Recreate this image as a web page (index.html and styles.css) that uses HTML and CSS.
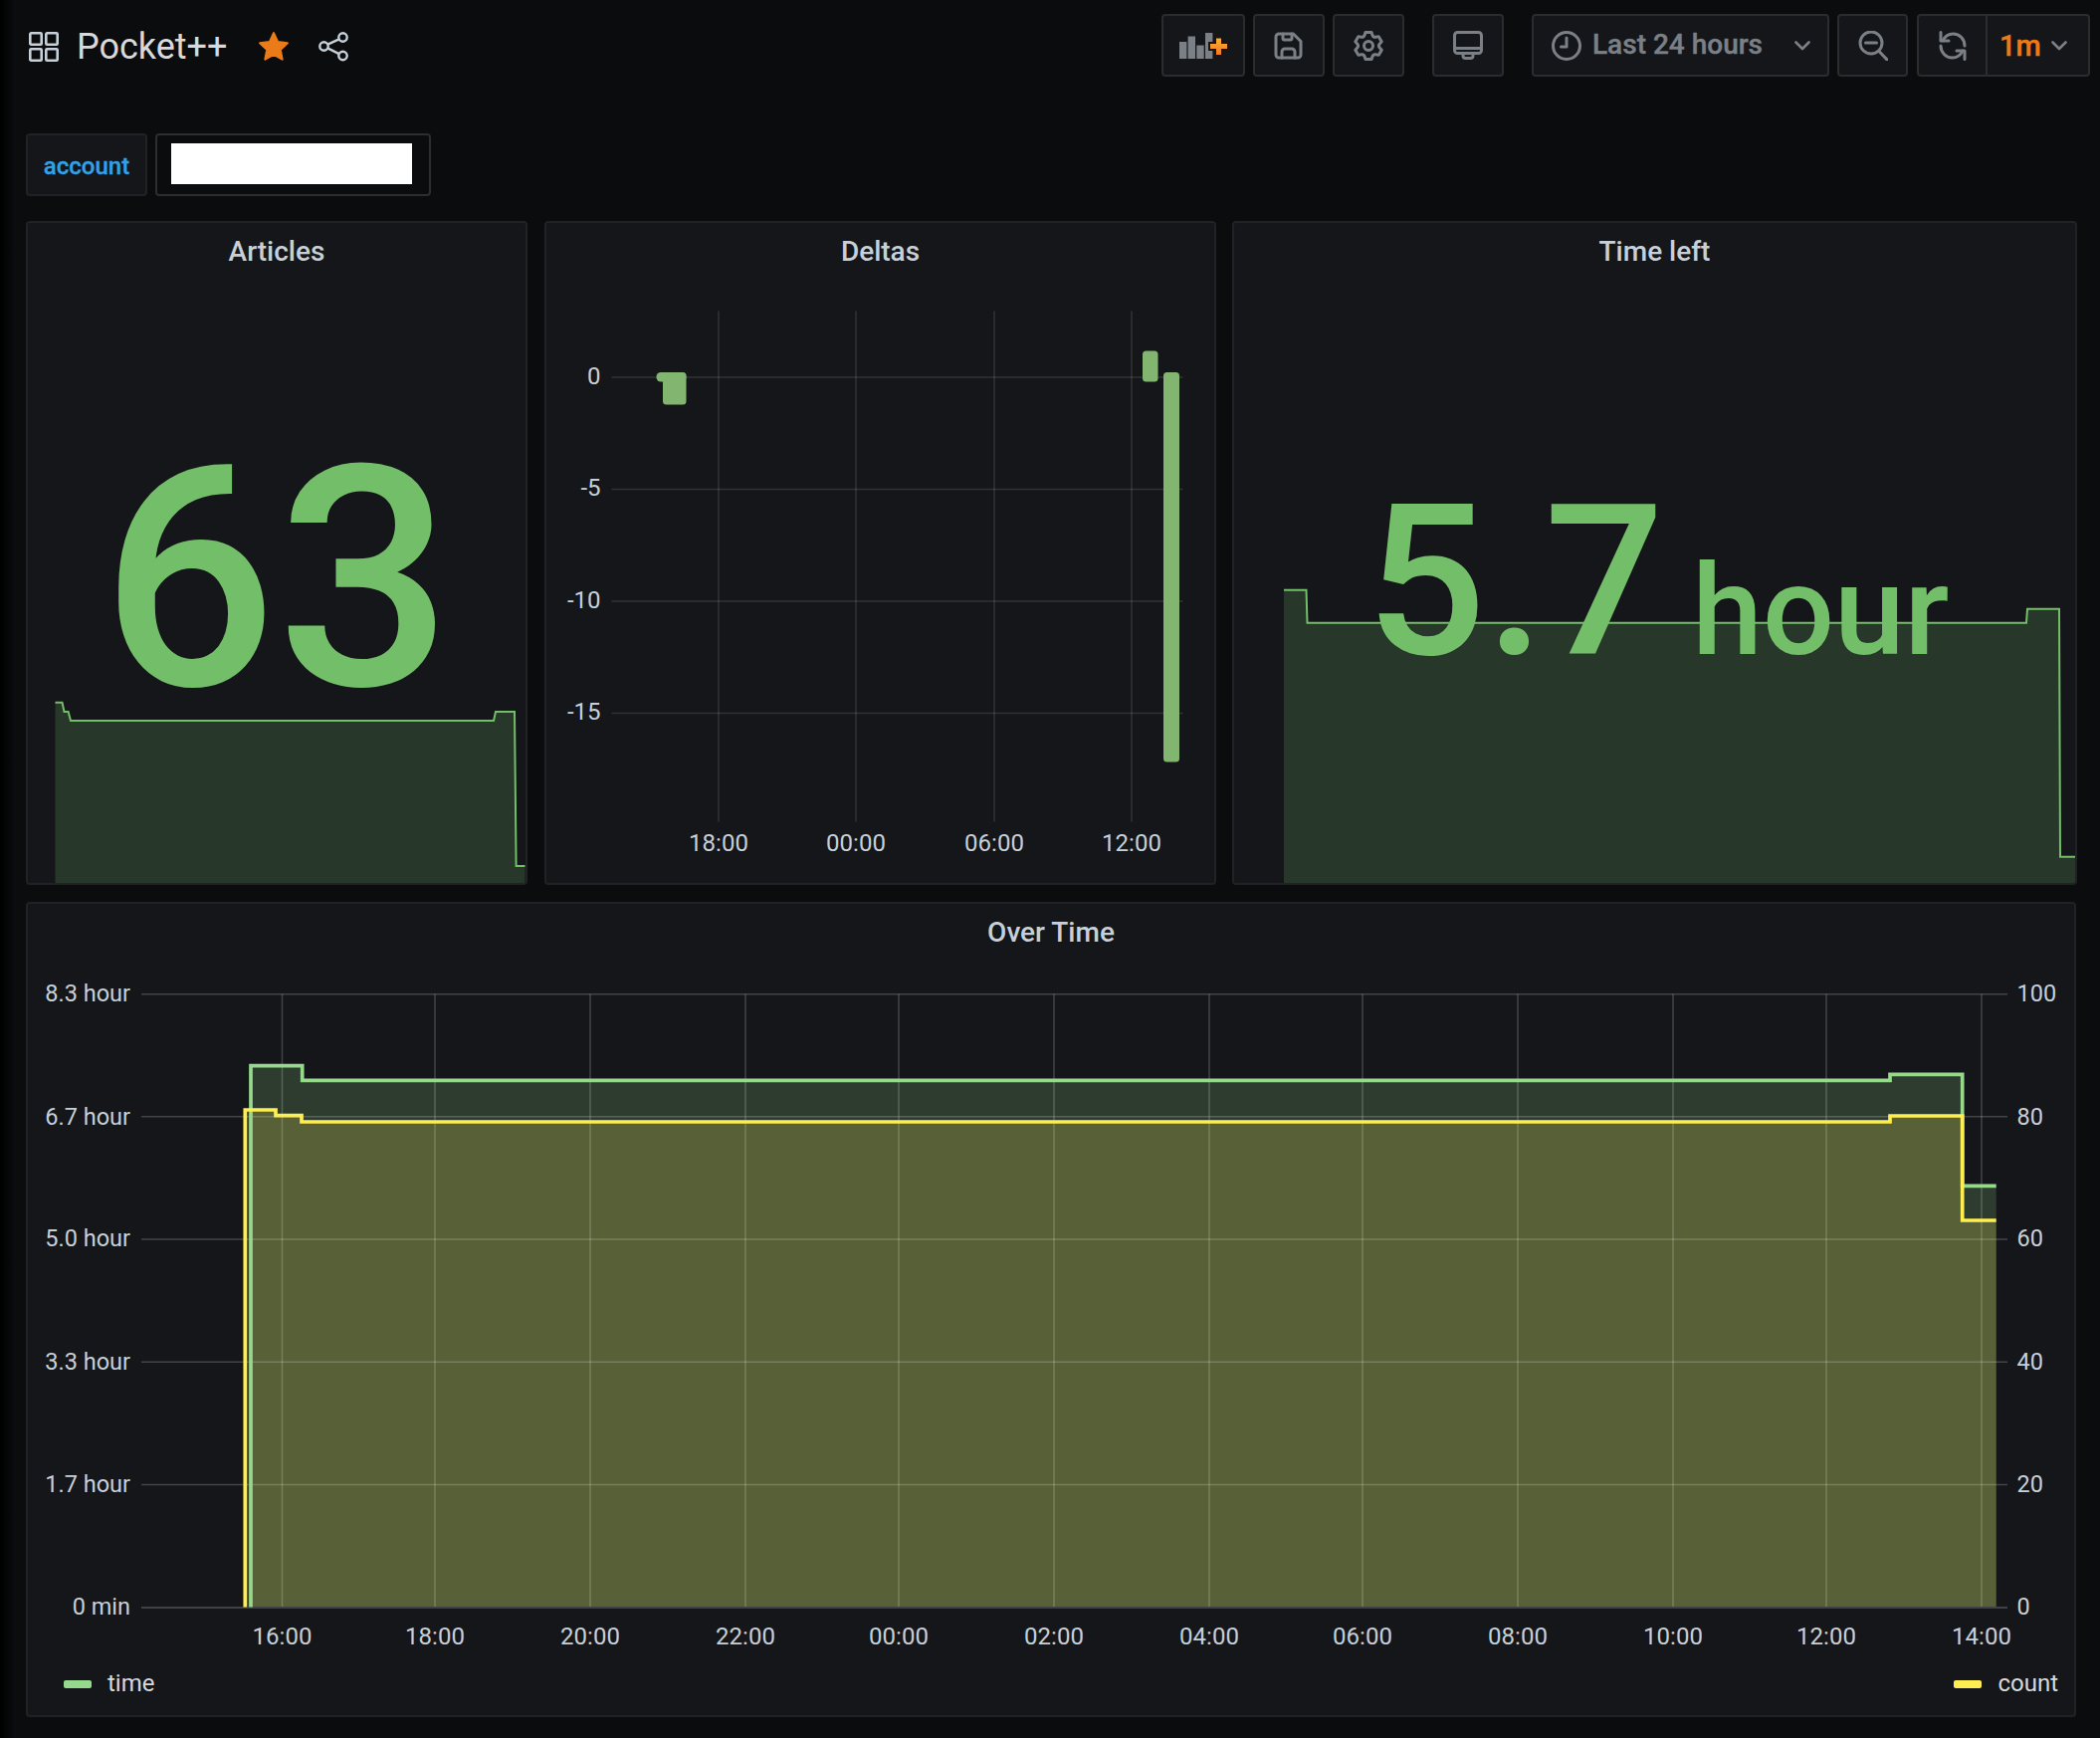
FILE: index.html
```html
<!DOCTYPE html>
<html lang="en">
<head>
<meta charset="utf-8">
<title>Pocket++</title>
<link rel="stylesheet" href="styles.css">
</head>
<body>
<div class="page">
  <header class="topbar">
    <svg class="ic-apps" viewBox="0 0 30 30"><rect x="1.300" y="1.300" width="11.400" height="11.400" rx="1"/><rect x="17.300" y="1.300" width="11.400" height="11.400" rx="1"/><rect x="1.300" y="17.300" width="11.400" height="11.400" rx="1"/><rect x="17.300" y="17.300" width="11.400" height="11.400" rx="1"/></svg>
    <h1 class="dash-title">Pocket++</h1>
    <svg class="ic-star" viewBox="0 0 30 30"><path d="M15 2l3.900 8.400 9.100 1.100-6.700 6.200 1.800 9.100-8.100-4.500-8.100 4.500 1.800-9.100L2 11.500l9.100-1.100z"/></svg>
    <svg class="ic-share" viewBox="0 0 30 30"><circle cx="24.500" cy="5.500" r="4.200"/><circle cx="5.500" cy="14.500" r="4.200"/><circle cx="24.500" cy="24" r="4.200"/><path d="M9.300 12.700l11.400-5.400M9.300 16.400l11.400 5.700"/></svg>
    <div class="actions">
      <button class="btn btn-add">
        <svg class="ic-add" viewBox="0 0 50 30"><defs><linearGradient id="plusgrad" x1="0" y1="0" x2="0" y2="1"><stop offset="0" stop-color="#fbb02f"/><stop offset="1" stop-color="#f1782a"/></linearGradient></defs>
          <rect class="bar" x="0" y="11" width="7.400" height="17"/><rect class="bar" x="8.600" y="5.500" width="7.400" height="22.500"/><rect class="bar" x="17.300" y="14.500" width="7.400" height="13.500"/><rect class="bar" x="26" y="2" width="7.400" height="26"/>
          <path class="plus-edge" d="M37 7.500h5v5.500h6v5h-6v6h-5v-6h-6v-5h6z"/><path class="plus" d="M37 7.500h5v5.500h6v5h-6v6h-5v-6h-6v-5h6z"/></svg>
      </button>
      <button class="btn btn-save">
        <svg class="ic" viewBox="0 0 30 30"><path d="M5 3h14.500L27 10.500V24a3 3 0 0 1-3 3H5a3 3 0 0 1-3-3V6a3 3 0 0 1 3-3z"/><path d="M9 3v4.500A1.500 1.500 0 0 0 10.500 9h6A1.500 1.500 0 0 0 18 7.500V3"/><path d="M8 27v-6a3 3 0 0 1 3-3h7a3 3 0 0 1 3 3v6"/></svg>
      </button>
      <button class="btn btn-cog">
        <svg class="ic-fill" viewBox="1.640 2 20 20"><path d="M19.9,12.66a1,1,0,0,1,0-1.32L21.18,9.9a1,1,0,0,0,.12-1.17l-2-3.46a1,1,0,0,0-1.07-.48l-1.88.38a1,1,0,0,1-1.15-.66l-.61-1.83A1,1,0,0,0,13.64,2h-4a1,1,0,0,0-1,.68L8.08,4.51a1,1,0,0,1-1.15.66L5,4.79A1,1,0,0,0,4,5.27L2,8.73A1,1,0,0,0,2.1,9.9l1.27,1.44a1,1,0,0,1,0,1.32L2.1,14.1A1,1,0,0,0,2,15.27l2,3.46a1,1,0,0,0,1.07.48l1.88-.38a1,1,0,0,1,1.15.66l.61,1.83a1,1,0,0,0,1,.68h4a1,1,0,0,0,.95-.68l.61-1.83a1,1,0,0,1,1.15-.66l1.88.38a1,1,0,0,0,1.07-.48l2-3.46a1,1,0,0,0-.12-1.17ZM18.41,14l.8.9-1.28,2.22-1.18-.24a3,3,0,0,0-3.45,2L12.92,20H10.36L10,18.86a3,3,0,0,0-3.45-2l-1.18.24L4.07,14.89l.8-.9a3,3,0,0,0,0-4l-.8-.9L5.35,6.89l1.18.24a3,3,0,0,0,3.45-2L10.36,4h2.56l.38,1.14a3,3,0,0,0,3.45,2l1.18-.24,1.28,2.22-.8.9A3,3,0,0,0,18.41,14ZM11.64,8a4,4,0,1,0,4,4A4,4,0,0,0,11.64,8Zm0,6a2,2,0,1,1,2-2A2,2,0,0,1,11.64,14Z"/></svg>
      </button>
      <button class="btn btn-tv">
        <svg class="ic" viewBox="0 0 30 30"><rect x="1.500" y="1.500" width="27" height="21" rx="3"/><path d="M1.500 17.500h27"/><path d="M10 22.500v2.500a2.500 2.500 0 0 0 2.500 2.500h5a2.500 2.500 0 0 0 2.500-2.500v-2.500"/></svg>
      </button>
      <button class="btn btn-time">
        <svg class="ic" viewBox="0 0 30 30"><circle cx="15" cy="15" r="13.500"/><path d="M15 7v9H9.500"/></svg>
        <span class="time-label">Last 24 hours</span>
        <svg class="ic-chev" viewBox="0 0 16 10"><path d="M1.500 1.500L8 8l6.500-6.500"/></svg>
      </button>
      <button class="btn btn-zoom">
        <svg class="ic" viewBox="0 0 30 30"><circle cx="13" cy="12" r="11"/><path d="M7.500 12h11M21 20.500l8 8.500"/></svg>
      </button>
      <div class="btn-group">
        <button class="seg seg-refresh">
          <svg class="ic" viewBox="0 0 30 30"><path d="M5 10C7 5.500 11 3 15.500 3 22 3 27 8.500 27 15"/><path d="M3 1.500V10h8"/><path d="M3 15c0 6.500 5 12 11.500 12 4.500 0 8.500-2.500 10.500-7"/><path d="M27 28.500V20h-8"/></svg>
        </button>
        <button class="seg seg-interval">
          <span class="interval">1m</span>
          <svg class="ic-chev" viewBox="0 0 16 10"><path d="M1.500 1.500L8 8l6.500-6.500"/></svg>
        </button>
      </div>
    </div>
  </header>

  <section class="vars">
    <label class="var-label">account</label>
    <div class="var-box"><div class="redacted"></div></div>
  </section>

  <section class="row row-top">
    <article class="panel panel-articles">
      <h2 class="panel-title">Articles</h2>
      <svg class="chart" viewBox="28 278 500 609">
        <path class="spark-fill" d="M55.500 887V705.700H62.500L64.500 715H68.600L71 724H496L498 715H517L518.600 870H527.500V887Z"/>
        <path class="spark-line" d="M55.500 705.700H62.500L64.500 715H68.600L71 724H496L498 715H517L518.600 870H527.500"/>
      </svg>
      <div class="stat stat-articles"><span class="stat-num">63</span></div>
    </article>

    <article class="panel panel-deltas">
      <h2 class="panel-title">Deltas</h2>
      <svg class="chart" viewBox="549 278 671 609">
        <g class="grid">
          <path d="M614.500 379H1188.500M614.500 491.500H1188.500M614.500 604H1188.500M614.500 716.500H1188.500"/>
          <path d="M722 312.500V825.500M860 312.500V825.500M999 312.500V825.500M1137 312.500V825.500"/>
        </g>
        <g class="delta-bars">
          <rect x="659.500" y="374" width="30" height="9.500" rx="4.500"/>
          <rect x="666" y="374" width="23.500" height="32.500" rx="3.500"/>
          <rect x="1148" y="352.500" width="15.500" height="31" rx="3.500"/>
          <rect x="1169" y="374" width="16" height="391.500" rx="3.500"/>
        </g>
        <g class="axis-text end">
          <text x="603.500" y="385.500">0</text>
          <text x="603.500" y="498">-5</text>
          <text x="603.500" y="610.500">-10</text>
          <text x="603.500" y="723">-15</text>
        </g>
        <g class="axis-text mid">
          <text x="722" y="854.500">18:00</text>
          <text x="860" y="854.500">00:00</text>
          <text x="999" y="854.500">06:00</text>
          <text x="1137" y="854.500">12:00</text>
        </g>
      </svg>
    </article>

    <article class="panel panel-left">
      <h2 class="panel-title">Time left</h2>
      <svg class="chart" viewBox="1240 278 845 609">
        <path class="spark-fill" d="M1290 887V592.700H1312.500L1313.500 625.700H2036L2037 611.700H2069L2070 860.700H2085V887Z"/>
        <path class="spark-line" d="M1290 592.700H1312.500L1313.500 625.700H2036L2037 611.700H2069L2070 860.700H2085"/>
      </svg>
      <div class="stat stat-left"><span class="stat-num-md">5.7</span><span class="stat-unit">hour</span></div>
    </article>
  </section>

  <section class="row row-bottom">
    <article class="panel panel-over">
      <h2 class="panel-title">Over Time</h2>
      <svg class="chart" viewBox="28 962 2056 706">
        <path class="fill-green" d="M252 1614.500V1070.700H303.700V1085.300H1899V1079.300H1971.700V1191.300H2005.700V1614.500Z"/>
        <path class="fill-yellow" d="M246.300 1614.500V1115H277V1120.700H303V1127H1899V1121H1971.700V1226H2005.700V1614.500Z"/>
        <g class="grid grid-over">
          <path d="M142 998.700H2017M142 1121.800H2017M142 1245H2017M142 1368.200H2017M142 1491.500H2017"/>
          <path d="M283.500 998.700V1614M437 998.700V1614M593 998.700V1614M749 998.700V1614M903 998.700V1614M1059 998.700V1614M1215 998.700V1614M1369 998.700V1614M1525 998.700V1614M1681 998.700V1614M1835 998.700V1614M1991 998.700V1614"/>
        </g>
        <path class="baseline" d="M142 1615H2017"/>
        <path class="line-green" d="M252 1614.500V1070.700H303.700V1085.300H1899V1079.300H1971.700V1191.300H2005.700"/>
        <path class="line-yellow" d="M246.300 1614.500V1115H277V1120.700H303V1127H1899V1121H1971.700V1226H2005.700"/>
        <g class="axis-text end axis-y">
          <text x="131" y="1006">8.3 hour</text>
          <text x="131" y="1129.500">6.7 hour</text>
          <text x="131" y="1252">5.0 hour</text>
          <text x="131" y="1375.500">3.3 hour</text>
          <text x="131" y="1498.500">1.7 hour</text>
          <text x="131" y="1622">0 min</text>
        </g>
        <g class="axis-text axis-y">
          <text x="2026.500" y="1006">100</text>
          <text x="2026.500" y="1129.500">80</text>
          <text x="2026.500" y="1252">60</text>
          <text x="2026.500" y="1375.500">40</text>
          <text x="2026.500" y="1498.500">20</text>
          <text x="2026.500" y="1622">0</text>
        </g>
        <g class="axis-text mid">
          <text x="283.500" y="1652">16:00</text>
          <text x="437" y="1652">18:00</text>
          <text x="593" y="1652">20:00</text>
          <text x="749" y="1652">22:00</text>
          <text x="903" y="1652">00:00</text>
          <text x="1059" y="1652">02:00</text>
          <text x="1215" y="1652">04:00</text>
          <text x="1369" y="1652">06:00</text>
          <text x="1525" y="1652">08:00</text>
          <text x="1681" y="1652">10:00</text>
          <text x="1835" y="1652">12:00</text>
          <text x="1991" y="1652">14:00</text>
        </g>
      </svg>
      <footer class="legend">
        <div class="legend-item"><i class="swatch swatch-green"></i><span>time</span></div>
        <div class="legend-item"><i class="swatch swatch-yellow"></i><span>count</span></div>
      </footer>
    </article>
  </section>
</div>
</body>
</html>
```

FILE: styles.css
```css
* { box-sizing: border-box; }
html, body { margin: 0; padding: 0; }
body {
  width: 2110px;
  height: 1746px;
  overflow: hidden;
  background: linear-gradient(to right, #000 0, #0b0c0e 15px);
  color: #c7d0d9;
  font-family: Roboto, "Liberation Sans", sans-serif;
}
.page { display: flex; flex-direction: column; height: 100%; }

/* top bar */
.topbar {
  display: flex;
  align-items: center;
  height: 63px;
  margin-top: 14px;
  padding: 0 10px 0 29px;
}
.ic-apps { width: 30px; height: 30px; fill: none; stroke: #c7d0d9; stroke-width: 2.600; flex: none; margin-top: 3px; }
.dash-title {
  margin: 2px 0 0 18px;
  width: 182px;
  font-size: 36px;
  font-weight: 400;
  line-height: 40px;
  color: #d8d9da;
  flex: none;
}
.ic-star { width: 32px; height: 32px; fill: #eb7b18; stroke: #eb7b18; stroke-width: 2; stroke-linejoin: round; flex: none; margin-top: 2px; }
.ic-share { width: 30px; height: 30px; fill: none; stroke: #c7d0d9; stroke-width: 2.400; flex: none; margin: 2px 0 0 29px; }
.actions { display: flex; margin-left: auto; height: 63px; }
.btn, .btn-group {
  display: flex;
  align-items: center;
  justify-content: center;
  height: 63px;
  padding: 0;
  background: #141619;
  border: 2px solid #2a2c30;
  border-radius: 4px;
  color: #7b8087;
  font-family: inherit;
  flex: none;
}
.btn-add { width: 84px; }
.btn-save { width: 72px; margin-left: 8px; }
.btn-cog { width: 72px; margin-left: 8px; }
.btn-tv { width: 72px; margin-left: 28px; }
.btn-time { width: 299px; margin-left: 28px; justify-content: flex-start; padding-left: 18px; }
.btn-zoom { width: 71px; margin-left: 8px; }
.btn-group { width: 174px; margin-left: 9px; justify-content: flex-start; }
.ic { width: 30px; height: 30px; fill: none; stroke: #7b8087; stroke-width: 3; stroke-linecap: round; stroke-linejoin: round; flex: none; }
.ic-fill { width: 30px; height: 30px; fill: #7b8087; flex: none; }
.ic-chev { width: 16px; height: 10px; fill: none; stroke: #7b8087; stroke-width: 2.600; stroke-linecap: round; stroke-linejoin: round; flex: none; }
.ic-add { width: 50px; height: 30px; flex: none; margin-left: 2px; }
.ic-add .bar { fill: #7b8087; }
.ic-add .plus { fill: url(#plusgrad); }
.ic-add .plus-edge { fill: none; stroke: #141619; stroke-width: 4; }
.time-label { margin-left: 11px; font-size: 28px; font-weight: 500; line-height: 30px; color: #7b8087; margin-top: -2px; -webkit-text-stroke: .4px #7b8087; }
.btn-time .ic-chev { margin-left: 32px; }
.seg { display: flex; align-items: center; height: 100%; padding: 0; border: 0; background: transparent; font-family: inherit; }
.seg-refresh { width: 69px; justify-content: center; border-right: 2px solid #2a2c30; }
.seg-interval { flex: 1; padding-left: 12px; }
.interval { font-size: 29px; font-weight: 500; line-height: 30px; color: #eb7b18; -webkit-text-stroke: .4px #eb7b18; }
.seg-interval .ic-chev { margin-left: 10px; }

/* variables */
.vars { display: flex; gap: 8px; height: 63px; margin-top: 57px; padding-left: 26px; }
.var-label {
  display: flex;
  align-items: center;
  justify-content: center;
  width: 122px;
  padding-top: 2px;
  background: #141619;
  border: 2px solid #202226;
  border-radius: 4px;
  color: #33a2e5;
  font-size: 24px;
  font-weight: 500;
  -webkit-text-stroke: .3px #33a2e5;
}
.var-box {
  width: 277px;
  padding: 8px 14px;
  background: #0b0c0e;
  border: 2px solid #2c2e32;
  border-radius: 4px;
}
.redacted { width: 242px; height: 41px; background: #fff; }

/* panels */
.row { display: flex; padding-left: 26px; }
.row-top { height: 667px; margin-top: 25px; }
.row-bottom { height: 819px; margin-top: 17px; }
.panel {
  position: relative;
  display: flex;
  flex-direction: column;
  background: #141619;
  border: 2px solid #202226;
  border-radius: 4px;
  overflow: hidden;
}
.panel-articles { width: 504px; }
.panel-deltas { width: 675px; margin-left: 17px; }
.panel-left { width: 849px; margin-left: 16px; }
.panel-over { width: 2060px; }
.panel-title {
  margin: 0;
  height: 54px;
  font-size: 28px;
  font-weight: 500;
  line-height: 58px;
  text-align: center;
  color: #c7d0d9;
  flex: none;
}
.chart { display: block; width: 100%; flex: 1; min-height: 0; }

/* stat panels */
.spark-fill { fill: rgba(115, 191, 105, .2); }
.spark-line { fill: none; stroke: #73bf69; stroke-width: 2; }
.stat {
  position: absolute;
  left: 0;
  right: 0;
  display: flex;
  align-items: baseline;
  justify-content: center;
  color: #73bf69;
  font-weight: 500;
  line-height: 1;
}
.stat-articles { top: 203px; }
.stat-num { font-size: 310px; }
.stat-left { top: 255px; padding-left: 6px; }
.stat-num-md { font-size: 212px; }
.stat-unit { font-size: 127px; margin-left: 28px; }

/* charts */
.grid path { fill: none; stroke: rgba(255, 255, 255, .12); stroke-width: 1.500; }
.grid-over path { stroke: rgba(255, 255, 255, .2); }
.baseline { fill: none; stroke: #3f4144; stroke-width: 2; }
.delta-bars rect { fill: #82b56f; }
.axis-text text { fill: #c7d0d9; font-size: 24px; font-family: Roboto, "Liberation Sans", sans-serif; }
.axis-y text { font-size: 23.500px; }
.axis-text.end text { text-anchor: end; }
.axis-text.mid text { text-anchor: middle; }
.fill-green { fill: rgba(150, 217, 141, .2); }
.fill-yellow { fill: rgba(255, 238, 82, .2); }
.line-green { fill: none; stroke: #96d98d; stroke-width: 3.700; }
.line-yellow { fill: none; stroke: #ffee52; stroke-width: 3.700; }

/* legend */
.legend {
  display: flex;
  justify-content: space-between;
  align-items: center;
  flex: none;
  height: 55px;
  padding: 0 16px 10px 36px;
  color: #d8d9da;
  font-size: 24px;
}
.legend-item { display: flex; align-items: center; gap: 16px; }
.swatch { display: block; width: 28px; height: 8px; border-radius: 2px; margin-top: 2px; }
.swatch-green { background: #96d98d; }
.swatch-yellow { background: #ffee52; }
```
